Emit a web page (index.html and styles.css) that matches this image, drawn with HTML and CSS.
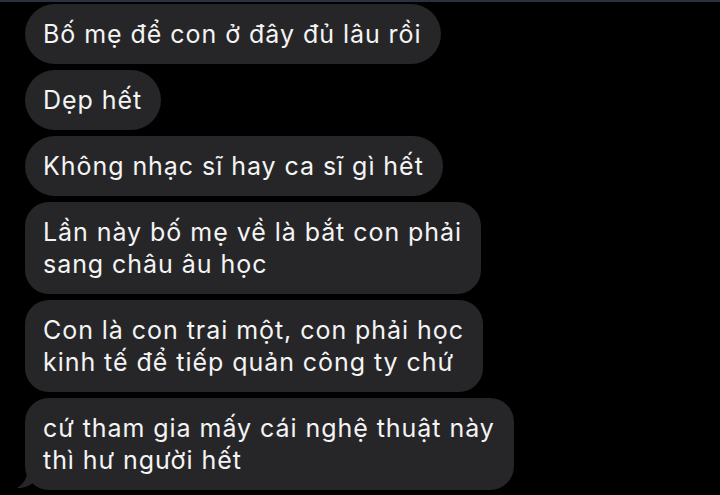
FILE: index.html
```html
<!DOCTYPE html>
<html lang="vi">
<head>
  <meta charset="UTF-8">
  <meta name="viewport" content="width=device-width, initial-scale=1.0">
  <title>Tin nhắn</title>
  <link rel="stylesheet" href="styles.css">
</head>
<body>

  <!-- Khung tin nhắn -->
  <div class="chat">
    <div class="bubble">Bố mẹ để con ở đây đủ lâu rồi</div>
    <div class="bubble">Dẹp hết</div>
    <div class="bubble">Không nhạc sĩ hay ca sĩ gì hết</div>
    <div class="bubble multi">Lần này bố mẹ về là bắt con phải<br>sang châu âu học</div>
    <div class="bubble multi">Con là con trai một, con phải học<br>kinh tế để tiếp quản công ty chứ</div>
    <div class="bubble multi last">
      cứ tham gia mấy cái nghệ thuật này<br>thì hư người hết
      <svg class="tail" width="24" height="24" viewBox="0 0 24 24">
        <path d="M13 0 L13 6 C13 13 9 18 3 22 C10 22 15 20 19 17 L24 17 L24 0 Z" fill="#262628"/>
      </svg>
    </div>
  </div>

</body>
</html>
```

FILE: styles.css
```css
body {
  margin: 0;
  padding: 0;
  background-color: #000;
  font-family: 'Inter', 'Noto Sans', sans-serif;
  border-top: 2px solid #2a313c;
  height: 493px;
  overflow: hidden;
}

.chat {
  display: flex;
  flex-direction: column;
  align-items: flex-start;
  gap: 6px;
  padding: 2px 0 0 25px;
}

.bubble {
  position: relative;
  box-sizing: border-box;
  background-color: #262628;
  color: #f4f4f4;
  font-size: 25px;
  letter-spacing: 0.95px;
  line-height: 32px;
  padding: 14px 19px 14px 18px;
  border-radius: 30px;
  white-space: nowrap;
}

.multi {
  border-radius: 24px;
}

/* Cola de la última burbuja */
.tail {
  position: absolute;
  left: -11px;
  bottom: 0;
}
```
